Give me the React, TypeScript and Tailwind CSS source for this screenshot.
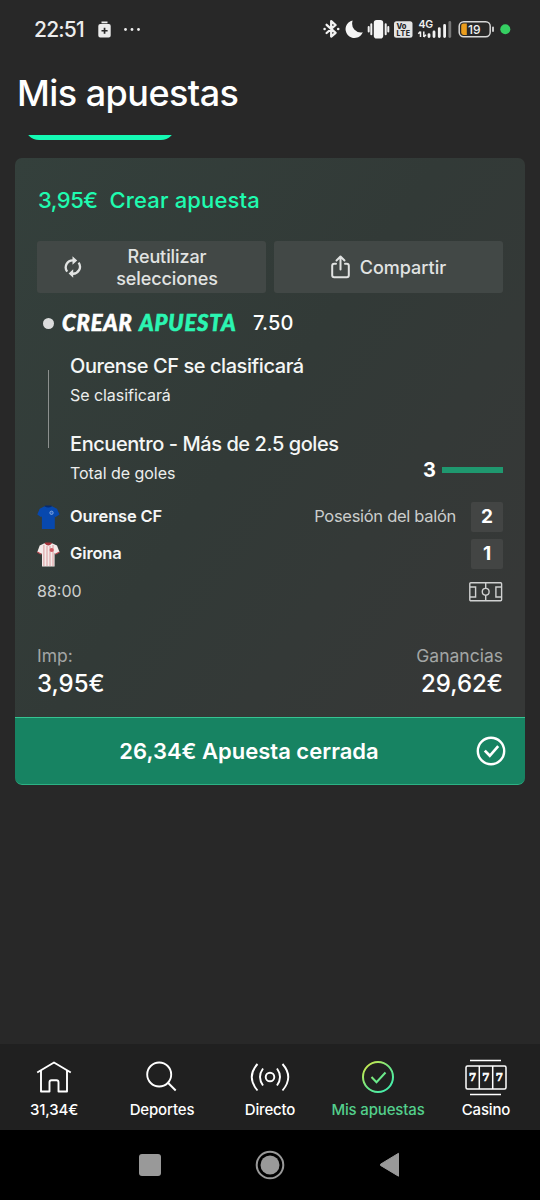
import React from "react";
import clsx from "clsx";

interface Selection {
  title: string;
  market: string;
}

interface NavItem {
  label: string;
  icon: React.ReactNode;
  active?: boolean;
}

const SELECTIONS: Selection[] = [
  { title: "Ourense CF se clasificará", market: "Se clasificará" },
  { title: "Encuentro - Más de 2.5 goles", market: "Total de goles" },
];

function StatusIcons() {
  return (
    <svg width="190" height="24" viewBox="0 0 190 24" fill="none">
      {/* bluetooth */}
      <path d="M3.6 6.8 12.6 14.8 8.2 18.6V3.2L12.6 7 3.6 15" stroke="#f2f2f2" strokeWidth="2.3" strokeLinejoin="round" strokeLinecap="round" />
      <circle cx="1.6" cy="11" r="1.3" fill="#f2f2f2" />
      <circle cx="15.2" cy="11" r="1.3" fill="#f2f2f2" />
      {/* no molestar */}
      <path d="M29.6 2.4A8.9 8.9 0 1 0 39.8 14.2Q34.5 15.2 31.300 11.600T29.600 2.400Z" fill="#f5f5f5" />
      {/* vibración */}
      <rect x="50.8" y="2" width="9.4" height="18.5" rx="2.8" fill="#f5f5f5" />
      <path d="M48.3 6.2v10M62.7 6.2v10M45.7 9v4.5M65.3 9v4.5" stroke="#f2f2f2" strokeWidth="2" strokeLinecap="round" />
      {/* VoLTE */}
      <rect x="71" y="3.3" width="18.5" height="16.4" rx="2.5" fill="#e4e4e4" />
      <text x="73.5" y="10.6" fontFamily="Inter, sans-serif" fontWeight="800" fontSize="7.5" fill="#282828">Vo</text>
      <text x="73.5" y="17.6" fontFamily="Inter, sans-serif" fontWeight="800" fontSize="7" fill="#282828" textLength="13.5">LTE</text>
      {/* cobertura */}
      <text x="95.5" y="10" fontFamily="Inter, sans-serif" fontWeight="600" fontSize="10.5" fill="#f2f2f2" textLength="14.5">4G</text>
      <path d="M97.5 19v-5.5m-2.2 2.2 2.2-2.2M100.8 13.5V19m2.2-2.2L100.8 19" stroke="#f2f2f2" strokeWidth="1.5" />
      <path d="M106 18.6v-2M111 18.6v-4.6M116.3 18.6V10.6M121.6 18.6V7.5" stroke="#f2f2f2" strokeWidth="2.8" strokeLinecap="round" />
      <path d="M126.8 18.5V4.5" stroke="#777" strokeWidth="2.8" strokeLinecap="round" />
      {/* batería */}
      <rect x="136.2" y="3.7" width="31" height="15" rx="4.5" stroke="#d8d8d8" strokeWidth="1.5" />
      <path d="M140.5 5.5h3.3v11.4h-3.3a2.3 2.3 0 0 1-2.3-2.3V7.8a2.3 2.3 0 0 1 2.3-2.3Z" fill="#eb9d1d" />
      <path d="M170 9.5v3.6" stroke="#d8d8d8" strokeWidth="1.8" strokeLinecap="round" />
      <text x="145" y="15.5" fontFamily="Inter, sans-serif" fontWeight="500" fontSize="12" fill="#f2f2f2">19</text>
      <circle cx="182.3" cy="11.2" r="5" fill="#35cf62" />
    </svg>
  );
}

function StatusBar() {
  return (
    <div className="flex h-[60px] items-center justify-between pl-[34px] pr-[27px] text-[#ececec]">
      <div className="flex items-center">
        <span className="w-[64px] text-[21px] font-[450] tracking-[-0.8px] whitespace-nowrap">22:51</span>
        <svg width="14" height="18" viewBox="0 0 14 18" fill="#ececec">
          <rect x="3.5" y="0.5" width="6" height="1.8" />
          <path
            fillRule="evenodd"
            d="M2.5 3h8A2 2 0 0 1 12.7 5v9.5a2 2 0 0 1-2 2h-8.4a2 2 0 0 1-2-2V5a2 2 0 0 1 2-2ZM5.7 6.7v2.2H3.5v1.7h2.2v2.2h1.7v-2.2h2.2V8.900H7.4V6.7Z"
          />
        </svg>
        <svg className="ml-[11px]" width="18" height="4" viewBox="0 0 18 4" fill="#ececec">
          <circle cx="2.5" cy="1.5" r="1.4" />
          <circle cx="9" cy="1.5" r="1.4" />
          <circle cx="15.5" cy="1.5" r="1.4" />
        </svg>
      </div>
      <StatusIcons />
    </div>
  );
}

function BlueShirt() {
  return (
    <svg width="23" height="25" viewBox="0 0 23 25">
      <path d="M7.5 1.2 15 1.2 20 3.7 22.5 9.5 18.3 12.2 17.8 11 17.8 24H4.9V11L4.3 12.2.3 9.5 2.7 3.7Z" fill="#0748ae" />
      <path d="M7.5 1.2Q11.3 3.6 15 1.2L14.2.5H8.3Z" fill="#082b6e" />
      <circle cx="14.5" cy="7.8" r="1.7" fill="#2a65c4" stroke="#9dbbe8" strokeWidth="0.7" />
    </svg>
  );
}

function StripedShirt() {
  return (
    <svg width="23" height="25" viewBox="0 0 23 25">
      <path d="M7.5 1.2 15 1.2 20 3.5 22.5 10 18.3 12.2 17.6 11 17.6 24.5H5V11L4.3 12.2.3 10 2.7 3.5Z" fill="#f3ebea" />
      <path d="M6.9 3v21M10 4v20M13 4v20M16 3v21" stroke="#dc9a9d" strokeWidth="1" />
      <path d="M.3 10 4.3 12.2M22.5 10 18.3 12.2" stroke="#b9464d" strokeWidth="1.2" />
      <path d="M7.5 1.2Q11.3 6 15 1.2L14.2.5H8.3Z" fill="#a5343c" />
      <circle cx="14.7" cy="8" r="2.1" fill="#cf5860" />
    </svg>
  );
}

function PitchIcon() {
  return (
    <svg width="34" height="20" viewBox="0 0 34 20" fill="none" stroke="#d0d1d1" strokeWidth="1.4">
      <rect x="0.8" y="0.8" width="31.8" height="18" rx="1" />
      <path d="M16.7 .8v5.6M16.7 13.2v5.6M1 5h5.6v10H1M32.5 5h-5.6v10h5.6" />
      <circle cx="16.7" cy="9.8" r="3.4" />
    </svg>
  );
}

function CheckCircle() {
  return (
    <svg width="30" height="30" viewBox="0 0 30 30" fill="none" stroke="#fff" strokeWidth="2.4">
      <circle cx="15" cy="15" r="13.2" />
      <path d="m8.8 14.6 5 5.2 8.4-9.6" strokeWidth="2.7" />
    </svg>
  );
}

function TeamRow({ shirt, name, goals, note }: { shirt: React.ReactNode; name: string; goals: number; note?: string }) {
  return (
    <div className="flex h-[30px] items-center">
      {shirt}
      <span className="ml-[10px] pb-px text-[16.5px] font-semibold tracking-[-0.15px] text-[#f5f6f6]">{name}</span>
      {note && <span className="ml-auto mr-[15px] pb-px text-[16.5px] tracking-[-0.3px] text-[#cbcdcc]">{note}</span>}
      <span
        className={clsx(
          "flex h-[30px] w-8 items-center justify-center rounded-[2px] bg-[#434544] pt-px text-[19px] font-bold text-white",
          !note && "ml-auto"
        )}
      >
        {goals}
      </span>
    </div>
  );
}

function BetCard() {
  return (
    <section className="mx-[15px] overflow-hidden rounded-[7px] bg-[linear-gradient(125deg,#34403c_0%,#323a37_45%,#363837_85%)]">
      <div className="h-[559px] pl-[22px] pr-[22px]">
        <div className="flex h-[83px] items-center gap-[12px] pt-[2px] text-[22px] font-medium text-[#1ffbb0]">
          <span className="pl-px tracking-[-0.5px]">3,95€</span>
          <span className="tracking-[0.15px]">Crear apuesta</span>
        </div>

        <div className="flex h-[52px] gap-2 text-[18px] font-medium text-[#e1e3e2]">
          <button type="button" className="flex flex-1 items-center rounded-[3px] bg-[#424846]">
            <svg className="ml-[27px] shrink-0" width="18" height="22" viewBox="0 0 18 22" fill="none" stroke="#e1e3e2" strokeWidth="2.3">
              <path d="M3.2 15.6A7 7 0 0 1 9.5 4.4M14.6 6.6A7 7 0 0 1 8.3 17.7" />
              <path d="M8.5.3 13.2 4.6 8.5 8.8ZM9.2 13.3 4.6 17.6 9.2 21.8Z" fill="#e1e3e2" stroke="none" />
            </svg>
            <span className="ml-[17px] w-[136px] pt-px text-center leading-[22px] tracking-[-0.1px]">Reutilizar selecciones</span>
          </button>
          <button type="button" className="flex flex-1 items-center justify-center gap-[10px] rounded-[3px] bg-[#424846]">
            <svg width="19" height="24" viewBox="0 0 19 24" fill="none" stroke="#e1e3e2" strokeWidth="2" strokeLinecap="round" strokeLinejoin="round">
              <path d="M5 8.8H3.2A2 2 0 0 0 1.2 10.8v9.5a2 2 0 0 0 2 2h12.6a2 2 0 0 0 2-2v-9.5a2 2 0 0 0-2-2H14M9.5 14.5V1.8M5.5 5.5l4-4 4 4" />
            </svg>
            <span>Compartir</span>
          </button>
        </div>

        <div className="flex h-[60px] items-center pl-[6px]">
          <span className="size-[11px] rounded-full bg-[#dcdddd]" />
          <span className="ml-[8px] w-[174px] pb-[2px] font-['Lato',sans-serif] text-[22px] font-black italic tracking-[0.85px] [word-spacing:1.5px] whitespace-nowrap text-white [-webkit-text-stroke:0.6px_currentColor]">
            CREAR <span className="text-[#2bf5b2]">APUESTA</span>
          </span>
          <span className="ml-[17px] text-[20px] font-medium tracking-[0.1px] text-white">7.50</span>
        </div>

        <div className="flex h-[149px]">
          <div className="mt-[17px] ml-[11px] h-[78px] w-px bg-[#8c908e]" />
          <div className="ml-[21px] flex-1 text-[#f4f6f5]">
            {SELECTIONS.map((s) => (
              <div key={s.title} className="h-[78px]">
                <div className="h-[26px] text-[20px] leading-[26px] font-medium tracking-[-0.43px] whitespace-nowrap">{s.title}</div>
                <div className="mt-[3px] h-[26px] text-[16px] leading-[26px] tracking-[-0.05px] text-[#eceeed]">{s.market}</div>
              </div>
            ))}
          </div>
          <div className="mt-[105px] flex h-[24px] items-center gap-[6px]">
            <span className="text-[20px] font-bold text-white">3</span>
            <span className="h-[6px] w-[61px] bg-[#1f986f]" />
          </div>
        </div>

        <div className="flex flex-col gap-[7px]">
          <TeamRow shirt={<BlueShirt />} name="Ourense CF" goals={2} note="Posesión del balón" />
          <TeamRow shirt={<StripedShirt />} name="Girona" goals={1} />
        </div>

        <div className="flex h-[45px] items-center justify-between text-[16px] text-[#cdcfce]">
          <span className="pb-[2px]">88:00</span>
          <PitchIcon />
        </div>

        <div className="mt-[28px] flex justify-between">
          <div>
            <div className="text-[17.5px] leading-[28px] text-[#a3a6a5]">Imp:</div>
            <div className="text-[24px] leading-[28px] font-medium text-white">3,95€</div>
          </div>
          <div className="text-right">
            <div className="text-[17.5px] leading-[28px] text-[#a3a6a5]">Ganancias</div>
            <div className="text-[24px] leading-[28px] font-medium text-white">29,62€</div>
          </div>
        </div>
      </div>

      <div className="flex h-[68px] items-center rounded-b-[7px] border-y border-t-[#35c492] border-b-[#2cb284] bg-[#178362] text-white">
        <span className="ml-[104px] w-[260px] text-center text-[22px] font-semibold whitespace-nowrap">26,34€ Apuesta cerrada</span>
        <span className="ml-[97px]">
          <CheckCircle />
        </span>
      </div>
    </section>
  );
}

const NAV: NavItem[] = [
  {
    label: "31,34€",
    icon: (
      <svg width="36" height="36" viewBox="0 0 36 36" fill="none" stroke="#fff" strokeWidth="1.9">
        <path d="M1.2 12.5 18 2.5l16.8 10M5 10.5V31.5h8.5V22.3a2 2 0 0 1 2-2h5a2 2 0 0 1 2 2V31.5H31V10.5" strokeLinejoin="round" />
      </svg>
    ),
  },
  {
    label: "Deportes",
    icon: (
      <svg width="36" height="36" viewBox="0 0 36 36" fill="none" stroke="#fff" strokeWidth="1.9">
        <circle cx="15.2" cy="14.5" r="12" />
        <path d="m23.7 22.5 8 8" />
      </svg>
    ),
  },
  {
    label: "Directo",
    icon: (
      <svg width="40" height="36" viewBox="0 0 40 36" fill="none" stroke="#fff" strokeWidth="1.9">
        <circle cx="20" cy="17" r="4.3" />
        <path d="M13 8.5Q7 17 13 25.5M27 8.5Q33 17 27 25.5M7.5 4Q-4 17 7.5 30.5M32.5 4Q44 17 32.5 30.5" />
      </svg>
    ),
  },
  {
    label: "Mis apuestas",
    active: true,
    icon: (
      <svg width="36" height="36" viewBox="0 0 36 36" fill="none" stroke="url(#activo)" strokeWidth="2">
        <defs>
          <linearGradient id="activo" x1="4" y1="2" x2="30" y2="32" gradientUnits="userSpaceOnUse">
            <stop stopColor="#d9ea45" />
            <stop offset="0.5" stopColor="#72e884" />
            <stop offset="1" stopColor="#3cf0b4" />
          </linearGradient>
        </defs>
        <circle cx="18" cy="17" r="15" />
        <path d="m11.5 17 5 5.3L25.5 12.5" />
      </svg>
    ),
  },
  {
    label: "Casino",
    icon: (
      <svg width="42" height="38" viewBox="0 0 42 38" fill="none" stroke="#fff" strokeWidth="1.5">
        <rect x="1" y="7" width="40" height="23" rx="1.5" />
        <path d="M14.3 7v23M27.7 7v23M5 1.5h31M5 35.5h31" />
        {/* los tres sietes de los rodillos */}
        <g stroke="#fff" strokeWidth="0.6" fill="#fff" fontFamily="'DejaVu Serif', serif" fontWeight="700" fontSize="10.5" textAnchor="middle">
          <text x="7.7" y="22.3">7</text>
          <text x="21" y="22.3">7</text>
          <text x="34.3" y="22.3">7</text>
        </g>
      </svg>
    ),
  },
];

function BottomNav() {
  return (
    <nav className="grid h-[86px] grid-cols-5 bg-[#202020]">
      {NAV.map((item) => (
        <div key={item.label} className="flex flex-col items-center">
          <div className="mt-[15px] flex h-[38px] items-center">{item.icon}</div>
          <span
            className={clsx(
              "mt-[3px] text-[15px] leading-[20px] font-medium tracking-[-0.15px] whitespace-nowrap",
              item.active ? "text-[#53cf8c]" : "text-white"
            )}
          >
            {item.label}
          </span>
        </div>
      ))}
    </nav>
  );
}

function SystemNav() {
  return (
    <div className="flex h-[70px] items-center justify-center gap-[94px] bg-black">
      <span className="size-[22px] rounded-[3px] bg-[#999]" />
      <svg width="30" height="30" viewBox="0 0 30 30">
        <circle cx="15" cy="15" r="13.3" fill="none" stroke="#999" strokeWidth="2" />
        <circle cx="15" cy="15" r="9.5" fill="#999" />
      </svg>
      <svg width="22" height="26" viewBox="0 0 22 26">
        <path d="M1.5 12.2 19.5 1.3V24.2L1.5 13.4Z" fill="#999" stroke="#999" strokeLinejoin="round" />
      </svg>
    </div>
  );
}

export default function App() {
  return (
    <div className="flex h-[1200px] w-[540px] flex-col overflow-hidden bg-[#282828] font-['Inter',sans-serif]">
      <StatusBar />
      <h1 className="h-[75px] pl-[17px] text-[36px] leading-[67px] font-[480] tracking-[-0.55px] text-white">Mis apuestas</h1>
      {/* borde inferior de la pestaña activa, cortada por la cabecera */}
      <div className="ml-[25px] h-[5px] w-[150px] overflow-hidden">
        <div className="-mt-[27px] h-8 rounded-[14px] bg-[#14fab4]" />
      </div>
      <div className="h-[18px]" />
      <BetCard />
      <div className="flex-1" />
      <BottomNav />
      <SystemNav />
    </div>
  );
}
